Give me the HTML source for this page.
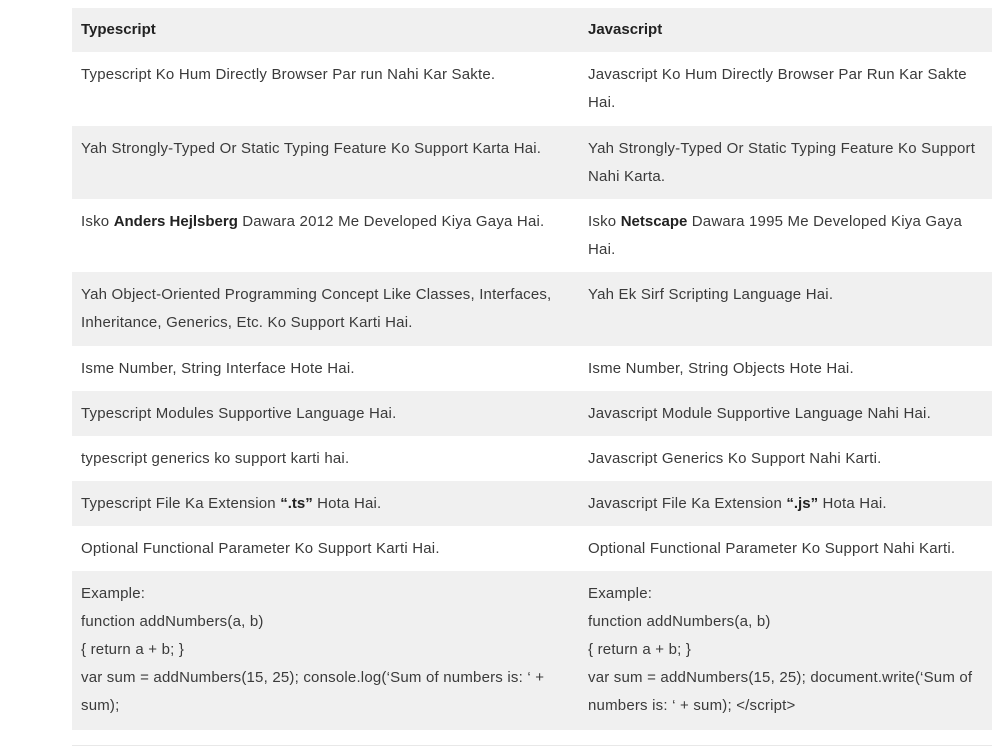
<!DOCTYPE html>
<html><head><meta charset="utf-8"><style>
html,body{margin:0;padding:0;background:#fff;width:1008px;height:748px;overflow:hidden}
body{font-family:"Liberation Sans",Arial,sans-serif;font-size:15px;color:#3a3a3a;letter-spacing:0.2px}
.r{position:absolute;left:72px;width:920px}
.g{background:#f0f0f0}
.c{position:absolute;top:9px;line-height:28px;white-space:nowrap}
.c1{left:9px}.c2{left:516px}
.h .c{font-weight:bold;color:#222;top:8px;letter-spacing:0}
b{color:#222;letter-spacing:0}
.line{position:absolute;left:72px;width:920px;top:745px;height:1px;background:#e8e8e8}
</style></head><body>
<div class="r g h" style="top:8px;height:44px"><div class="c c1">Typescript</div><div class="c c2">Javascript</div></div>
<div class="r" style="top:52px;height:74px"><div class="c c1">Typescript Ko Hum Directly Browser Par run Nahi Kar Sakte.</div><div class="c c2">Javascript Ko Hum Directly Browser Par Run Kar Sakte<br>Hai.</div></div>
<div class="r g" style="top:126px;height:73px"><div class="c c1">Yah Strongly-Typed Or Static Typing Feature Ko Support Karta Hai.</div><div class="c c2">Yah Strongly-Typed Or Static Typing Feature Ko Support<br>Nahi Karta.</div></div>
<div class="r" style="top:199px;height:73px"><div class="c c1">Isko <b>Anders Hejlsberg</b> Dawara 2012 Me Developed Kiya Gaya Hai.</div><div class="c c2">Isko <b>Netscape</b> Dawara 1995 Me Developed Kiya Gaya<br>Hai.</div></div>
<div class="r g" style="top:272px;height:74px"><div class="c c1">Yah Object-Oriented Programming Concept Like Classes, Interfaces,<br>Inheritance, Generics, Etc. Ko Support Karti Hai.</div><div class="c c2">Yah Ek Sirf Scripting Language Hai.</div></div>
<div class="r" style="top:346px;height:45px"><div class="c c1">Isme Number, String Interface Hote Hai.</div><div class="c c2">Isme Number, String Objects Hote Hai.</div></div>
<div class="r g" style="top:391px;height:45px"><div class="c c1">Typescript Modules Supportive Language Hai.</div><div class="c c2">Javascript Module Supportive Language Nahi Hai.</div></div>
<div class="r" style="top:436px;height:45px"><div class="c c1">typescript generics ko support karti hai.</div><div class="c c2">Javascript Generics Ko Support Nahi Karti.</div></div>
<div class="r g" style="top:481px;height:45px"><div class="c c1">Typescript File Ka Extension <b>“.ts”</b> Hota Hai.</div><div class="c c2">Javascript File Ka Extension <b>“.js”</b> Hota Hai.</div></div>
<div class="r" style="top:526px;height:45px"><div class="c c1">Optional Functional Parameter Ko Support Karti Hai.</div><div class="c c2">Optional Functional Parameter Ko Support Nahi Karti.</div></div>
<div class="r g" style="top:571px;height:159px"><div class="c c1">Example:<br>function addNumbers(a, b)<br>{ return a + b; }<br>var sum = addNumbers(15, 25); console.log(‘Sum of numbers is: ‘ +<br>sum);</div><div class="c c2">Example:<br>function addNumbers(a, b)<br>{ return a + b; }<br>var sum = addNumbers(15, 25); document.write(‘Sum of<br>numbers is: ‘ + sum); &lt;/script&gt;</div></div>
<div class="line"></div>
</body></html>
